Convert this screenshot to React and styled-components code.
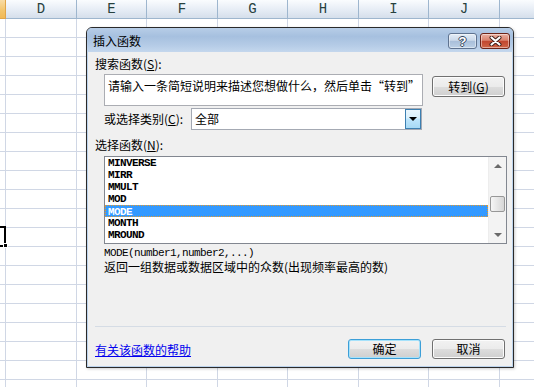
import React from 'react';
import styled, { createGlobalStyle } from 'styled-components';

const GlobalStyle = createGlobalStyle`
  html, body { margin: 0; padding: 0; background: #fff; overflow: hidden; }
  body { font-family: "Noto Sans CJK SC", "Noto Sans", sans-serif; }
  #root { width: 534px; height: 387px; }
`;

const Page = styled.div`
  position: relative;
  width: 534px;
  height: 387px;
  overflow: hidden;
  background: #fff;
`;

const Sheet = styled.div`
  display: flex;
  flex-direction: column;
`;

const HeaderRow = styled.div`
  display: flex;
  height: 19px;
`;

const ColHead = styled.div`
  flex: 0 0 ${p => p.$w}px;
  box-sizing: border-box;
  height: 19px;
  border-right: 1px solid ${p => (p.$sel ? '#e0a54a' : '#9eb6ce')};
  border-bottom: 1px solid ${p => (p.$sel ? '#e0a54a' : '#9eb6ce')};
  background: ${p =>
    p.$sel
      ? 'linear-gradient(#f9dca5, #f3c46a 60%, #f1b956)'
      : 'linear-gradient(#fafcfe, #e4ebf4 60%, #d5dfeb)'};
  font: 14px "Liberation Mono", monospace;
  color: #27413e;
  display: flex;
  align-items: center;
  justify-content: center;
`;

const Row = styled.div`
  display: flex;
  height: 19px;
`;

const Cell = styled.div`
  flex: 0 0 ${p => p.$w}px;
  box-sizing: border-box;
  border-right: 1px solid #d0d7e5;
  border-bottom: 1px solid #d0d7e5;
`;

const Selection = styled.div`
  position: absolute;
  left: -4px;
  top: 226px;
  width: 10px;
  height: 21px;
  box-sizing: border-box;
  border: 2px solid #000;
`;

const FillHandle = styled.div`
  position: absolute;
  left: 3px;
  top: 243px;
  width: 5px;
  height: 5px;
  box-sizing: border-box;
  background: #000;
  border: 1px solid #fff;
`;

const Dialog = styled.div`
  position: absolute;
  left: 86px;
  top: 27px;
  width: 428px;
  height: 341px;
  box-sizing: border-box;
  border: 1px solid #2a2a2a;
  border-radius: 6px 6px 0 0;
  background: #bcd3ec;
  display: flex;
  flex-direction: column;
  padding: 0 1px 1px;
  box-shadow: 1px 1px 3px rgba(0, 0, 0, 0.2);
`;

const TitleBar = styled.div`
  height: 24px;
  margin: 0 -1px;
  border-radius: 5px 5px 0 0;
  display: flex;
  align-items: flex-start;
  padding: 0 3px 0 6px;
  background: linear-gradient(#b7cde7 0%, #a6c0df 35%, #b4cbe6 70%, #c4d7ed 100%);
`;

const TitleText = styled.div`
  flex: 1;
  font-size: 12px;
  line-height: 12px;
  margin-top: 7px;
  color: #000;
  white-space: nowrap;
`;

const TitleButtons = styled.div`
  display: flex;
  gap: 3px;
  margin-top: 5px;
`;

const CaptionButton = styled.div`
  width: ${p => p.$w}px;
  height: 16px;
  box-sizing: border-box;
  border-radius: 3px;
  display: flex;
  align-items: center;
  justify-content: center;
  border: 1px solid ${p => (p.$close ? '#6d2418' : '#5f7390')};
  background: ${p =>
    p.$close
      ? 'linear-gradient(#eab0a2, #d9826d 45%, #c2472f 52%, #cf6547 100%)'
      : 'linear-gradient(#e3ecf6, #cbd9ea 45%, #a9bfda 52%, #bcd0e6 100%)'};
  box-shadow: inset 0 0 0 1px rgba(255, 255, 255, 0.45);
`;

const HelpGlyph = styled.span`
  font: bold 13px "Liberation Sans", sans-serif;
  line-height: 13px;
  color: #fff;
  text-shadow: 1px 0 #34465d, -1px 0 #34465d, 0 1px #34465d, 0 -1px #34465d;
`;

const Body = styled.div`
  flex: 1;
  background: #f0f0f0;
  display: flex;
  flex-direction: column;
  padding: 6px 0 0 7px;
  font-size: 12px;
  color: #000;
`;

const Label = styled.div`
  height: 12px;
  line-height: 12px;
  font-size: 12px;
  white-space: nowrap;
  margin-top: ${p => p.$mt || 0}px;
  margin-left: ${p => p.$ml || 0}px;
  width: ${p => (p.$w ? `${p.$w}px` : 'auto')};
  flex: none;
`;

const SearchRow = styled.div`
  display: flex;
  align-items: flex-start;
  margin-top: 4px;
  padding-left: 9px;
`;

const SearchBox = styled.div`
  width: 319px;
  height: 32px;
  box-sizing: border-box;
  border: 1px solid #abadb3;
  background: #fff;
  padding: 4px 3px;
  font-size: 12px;
  line-height: 14px;
  white-space: nowrap;
  overflow: hidden;
`;

const Button = styled.div`
  width: 73px;
  height: ${p => p.$h || 20}px;
  box-sizing: border-box;
  margin-left: ${p => p.$ml || 0}px;
  margin-top: ${p => p.$mt || 0}px;
  border: 1px solid ${p => (p.$default ? '#3c9fd8' : '#707070')};
  border-radius: 3px;
  background: linear-gradient(#f2f2f2 0%, #ebebeb 50%, #dddddd 51%, #cfcfcf 100%);
  box-shadow: inset 0 0 0 1px ${p => (p.$default ? '#a6e2fb' : '#fcfcfc')};
  display: flex;
  align-items: center;
  justify-content: center;
  font-size: 12px;
  line-height: 12px;
  white-space: nowrap;
`;

const Key = styled.span`
  text-decoration: underline;
`;

const CategoryRow = styled.div`
  display: flex;
  align-items: center;
  margin-top: 2px;
  padding-left: 9px;
  height: 22px;
`;

const Select = styled.div`
  width: 231px;
  height: 22px;
  box-sizing: border-box;
  border: 1px solid #a4a9b3;
  background: #fff;
  display: flex;
  align-items: stretch;
`;

const SelectValue = styled.div`
  flex: 1;
  padding-left: 3px;
  font-size: 12px;
  line-height: 20px;
`;

const ArrowBtn = styled.div`
  width: 16px;
  box-sizing: border-box;
  border: 1px solid #3c7fb1;
  background: linear-gradient(#eaf6fd, #d9f0fc 45%, #bee6fd 50%, #a7d9f5 100%);
  display: flex;
  align-items: center;
  justify-content: center;
`;

const ArrowDown = styled.div`
  width: 0;
  height: 0;
  border-left: 4px solid transparent;
  border-right: 4px solid transparent;
  border-top: 4px solid #000;
`;

const ListBox = styled.div`
  width: 403px;
  height: 88px;
  box-sizing: border-box;
  margin-top: 5px;
  margin-left: 9px;
  border: 1px solid #828790;
  background: #fff;
  display: flex;
`;

const Items = styled.div`
  flex: 1;
  display: flex;
  flex-direction: column;
`;

const Item = styled.div`
  height: 12px;
  box-sizing: border-box;
  line-height: ${p => (p.$sel ? 10 : 12)}px;
  padding-left: ${p => (p.$sel ? 2 : 3)}px;
  font: bold 11px "Liberation Mono", monospace;
  letter-spacing: -0.6px;
  color: ${p => (p.$sel ? '#fff' : '#000')};
  background: ${p => (p.$sel ? '#3399ff' : 'transparent')};
  border: ${p => (p.$sel ? '1px dotted #e89a2a' : 'none')};
`;

const ScrollBar = styled.div`
  width: 17px;
  background: #f3f3f3;
  border-left: 1px solid #ededed;
  display: flex;
  flex-direction: column;
  align-items: center;
`;

const ScrollArrow = styled.div`
  height: 17px;
  display: flex;
  align-items: center;
  justify-content: center;
`;

const TriUp = styled.div`
  width: 0;
  height: 0;
  border-left: 4px solid transparent;
  border-right: 4px solid transparent;
  border-bottom: 4px solid #6a6a6a;
`;

const TriDown = styled.div`
  width: 0;
  height: 0;
  border-left: 4px solid transparent;
  border-right: 4px solid transparent;
  border-top: 4px solid #6a6a6a;
`;

const Track = styled.div`
  flex: 1;
  width: 100%;
  display: flex;
  flex-direction: column;
  align-items: center;
`;

const Thumb = styled.div`
  width: 15px;
  height: 16px;
  box-sizing: border-box;
  margin-top: 22px;
  border: 1px solid #979797;
  border-radius: 2px;
  background: linear-gradient(90deg, #f6f6f6, #e6e6e6 50%, #d6d6d6 100%);
`;

const Syntax = styled.div`
  margin-top: 3px;
  margin-left: 9px;
  height: 12px;
  line-height: 12px;
  font: 11px "Liberation Mono", monospace;
  letter-spacing: -0.6px;
  white-space: nowrap;
`;

const Desc = styled.div`
  margin-top: 2px;
  margin-left: 9px;
  height: 12px;
  line-height: 12px;
  font-size: 12px;
  white-space: nowrap;
`;

const Separator = styled.div`
  margin-top: 53px;
  width: 411px;
  height: 1px;
  background: #d5dce5;
`;

const Footer = styled.div`
  margin-top: 12px;
  display: flex;
  align-items: center;
  padding-right: 7px;
  height: 20px;
`;

const HelpLink = styled.a`
  font-size: 12px;
  line-height: 12px;
  color: #0000ee;
  text-decoration: underline;
  margin-top: 1px;
  white-space: nowrap;
`;

const Spacer = styled.div`
  flex: 1;
`;

const colWidths = [6, 71, 70, 71, 70, 71, 70, 71, 70];
const colLabels = ['', 'D', 'E', 'F', 'G', 'H', 'I', 'J', ''];
const rows = Array.from({ length: 20 }, (_, i) => i);
const funcs = ['MINVERSE', 'MIRR', 'MMULT', 'MOD', 'MODE', 'MONTH', 'MROUND'];

export default function App() {
  return (
    <Page>
      <GlobalStyle />
      <Sheet>
        <HeaderRow>
          {colWidths.map((w, i) => (
            <ColHead key={i} $w={w} $sel={i === 0}>
              {colLabels[i]}
            </ColHead>
          ))}
        </HeaderRow>
        {rows.map(r => (
          <Row key={r}>
            {colWidths.map((w, i) => (
              <Cell key={i} $w={w} />
            ))}
          </Row>
        ))}
      </Sheet>
      <Selection />
      <FillHandle />

      <Dialog>
        <TitleBar>
          <TitleText>插入函数</TitleText>
          <TitleButtons>
            <CaptionButton $w={29}>
              <HelpGlyph>?</HelpGlyph>
            </CaptionButton>
            <CaptionButton $w={30} $close>
              <svg width="13" height="10" viewBox="0 0 13 10">
                <path d="M2.5 1.5 L10.5 8.5 M10.5 1.5 L2.5 8.5" stroke="#3a1a14" strokeWidth="4" strokeLinecap="round" />
                <path d="M2.5 1.5 L10.5 8.5 M10.5 1.5 L2.5 8.5" stroke="#ffffff" strokeWidth="2.2" strokeLinecap="round" />
              </svg>
            </CaptionButton>
          </TitleButtons>
        </TitleBar>
        <Body>
          <Label>
            搜索函数(<Key>S</Key>):
          </Label>
          <SearchRow>
            <SearchBox>请输入一条简短说明来描述您想做什么，然后单击“转到”</SearchBox>
            <Button $ml={9} $mt={2} $h={21}>
              转到(<Key>G</Key>)
            </Button>
          </SearchRow>
          <CategoryRow>
            <Label $w={87}>
              或选择类别(<Key>C</Key>):
            </Label>
            <Select>
              <SelectValue>全部</SelectValue>
              <ArrowBtn>
                <ArrowDown />
              </ArrowBtn>
            </Select>
          </CategoryRow>
          <Label $mt={9}>
            选择函数(<Key>N</Key>):
          </Label>
          <ListBox>
            <Items>
              {funcs.map(f => (
                <Item key={f} $sel={f === 'MODE'}>
                  {f}
                </Item>
              ))}
            </Items>
            <ScrollBar>
              <ScrollArrow>
                <TriUp />
              </ScrollArrow>
              <Track>
                <Thumb />
              </Track>
              <ScrollArrow>
                <TriDown />
              </ScrollArrow>
            </ScrollBar>
          </ListBox>
          <Syntax>MODE(number1,number2,...)</Syntax>
          <Desc>返回一组数据或数据区域中的众数(出现频率最高的数)</Desc>
          <Separator />
          <Footer>
            <HelpLink href="#">有关该函数的帮助</HelpLink>
            <Spacer />
            <Button $default>确定</Button>
            <Button $ml={11}>取消</Button>
          </Footer>
        </Body>
      </Dialog>
    </Page>
  );
}
